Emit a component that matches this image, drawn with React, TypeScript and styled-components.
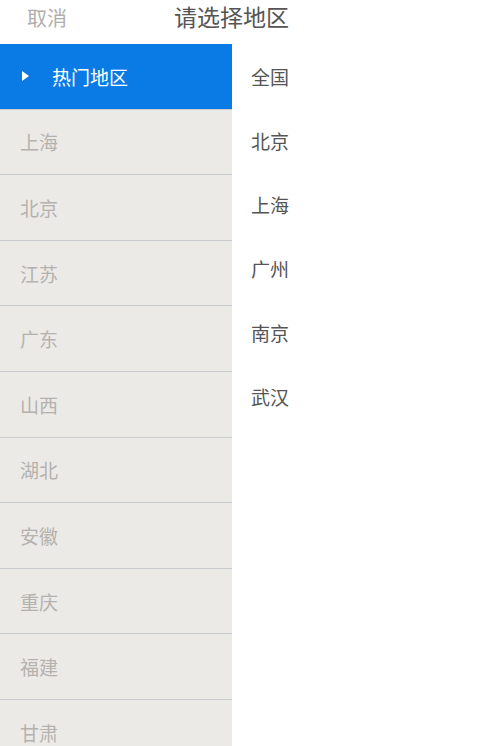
import React from "react";
import styled, { createGlobalStyle } from "styled-components";

const GlobalStyle = createGlobalStyle`
  html, body { margin: 0; padding: 0; background: #ffffff; }
  body {
    font-family: "Noto Sans CJK SC", "Noto Sans", sans-serif;
    overflow: hidden;
  }
  * { box-sizing: border-box; }
`;

const Page = styled.div`
  width: 478px;
  height: 746px;
  display: flex;
  flex-direction: column;
  background: #ffffff;
  overflow: hidden;
`;

const Header = styled.div`
  height: 44px;
  flex: 0 0 44px;
  display: flex;
  align-items: center;
  padding-left: 27px;
`;

const Cancel = styled.span`
  font-size: 20px;
  color: #b0aeab;
  line-height: 1;
  margin-top: -9px;
`;

const Title = styled.span`
  font-size: 23px;
  color: #555555;
  line-height: 1;
  margin-left: 107px;
  margin-top: -11px;
`;

const Body = styled.div`
  flex: 1;
  display: flex;
  min-height: 0;
`;

const Sidebar = styled.div`
  width: 232px;
  flex: 0 0 232px;
  background: #ebeae7;
  display: flex;
  flex-direction: column;
`;

const SideItem = styled.div<{ $active?: boolean }>`
  height: 65.6px;
  flex: 0 0 65.6px;
  display: flex;
  align-items: center;
  padding-left: ${(p) => (p.$active ? "22px" : "20px")};
  border-bottom: 1px solid #c9ccd2;
  background: ${(p) => (p.$active ? "#0a7be4" : "transparent")};
  color: ${(p) => (p.$active ? "#ffffff" : "#b5b2ae")};
  font-size: 19px;
`;

const Arrow = styled.span`
  width: 0;
  height: 0;
  border-top: 5.5px solid transparent;
  border-bottom: 5.5px solid transparent;
  border-left: 7px solid #ffffff;
  margin-right: 23px;
`;

const List = styled.div`
  flex: 1;
  display: flex;
  flex-direction: column;
`;

const ListItem = styled.div`
  height: 64px;
  flex: 0 0 64px;
  display: flex;
  align-items: center;
  padding-left: 19px;
  color: #555555;
  font-size: 19px;
`;

const provinces = ["上海", "北京", "江苏", "广东", "山西", "湖北", "安徽", "重庆", "福建", "甘肃"];
const cities = ["全国", "北京", "上海", "广州", "南京", "武汉"];

export default function App() {
  return (
    <>
      <GlobalStyle />
      <Page>
        <Header>
          <Cancel>取消</Cancel>
          <Title>请选择地区</Title>
        </Header>
        <Body>
          <Sidebar>
            <SideItem $active>
              <Arrow />
              热门地区
            </SideItem>
            {provinces.map((p) => (
              <SideItem key={p}>{p}</SideItem>
            ))}
          </Sidebar>
          <List>
            {cities.map((c) => (
              <ListItem key={c}>{c}</ListItem>
            ))}
          </List>
        </Body>
      </Page>
    </>
  );
}
